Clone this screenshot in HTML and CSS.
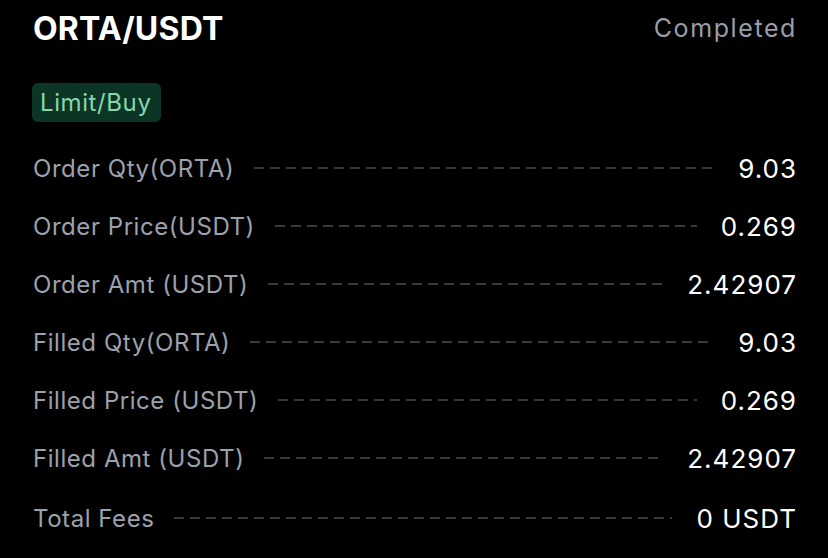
FILE: index.html
```html
<!DOCTYPE html>
<html>
<head>
<meta charset="utf-8">
<link rel="stylesheet" href="styles.css">
</head>
<body>
<div class="card">
  <div class="header">
    <div class="pair">ORTA/USDT</div>
    <div class="status">Completed</div>
  </div>
  <div class="badge-row"><span class="badge">Limit/Buy</span></div>
  <div class="rows">
    <div class="row"><span class="label">Order Qty(ORTA)</span><span class="dash"></span><span class="value">9.03</span></div>
    <div class="row"><span class="label">Order Price(USDT)</span><span class="dash"></span><span class="value">0.269</span></div>
    <div class="row"><span class="label">Order Amt (USDT)</span><span class="dash"></span><span class="value">2.42907</span></div>
    <div class="row"><span class="label">Filled Qty(ORTA)</span><span class="dash"></span><span class="value">9.03</span></div>
    <div class="row"><span class="label">Filled Price (USDT)</span><span class="dash"></span><span class="value">0.269</span></div>
    <div class="row"><span class="label">Filled Amt (USDT)</span><span class="dash"></span><span class="value">2.42907</span></div>
    <div class="row last"><span class="label">Total Fees</span><span class="dash"></span><span class="value">0 USDT</span></div>
  </div>
</div>
</body>
</html>
```
FILE: styles.css
```css
html, body {
  margin: 0;
  padding: 0;
  background: #000;
}
body {
  width: 828px;
  height: 558px;
  overflow: hidden;
  font-family: Inter, "Noto Sans", sans-serif;
}
.card {
  padding: 8px 32px 0 33px;
}
.header {
  display: flex;
  justify-content: space-between;
  align-items: center;
  height: 40px;
}
.pair {
  color: #fff;
  font-size: 32px;
  font-weight: 700;
  letter-spacing: 0.2px;
}
.status {
  color: #9a9ea8;
  font-size: 25px;
  letter-spacing: 1.6px;
  margin-right: -1px;
}
.badge-row {
  margin-top: 35px;
  display: flex;
}
.badge {
  display: inline-block;
  background: #0b3524;
  color: #8ad5ad;
  font-size: 24px;
  line-height: 39px;
  padding: 0 9px 0 8px;
  border-radius: 6px;
  margin-left: -1px;
  letter-spacing: 0.6px;
}
.rows {
  margin-top: 17px;
}
.row {
  display: flex;
  align-items: center;
  height: 58px;
}
.row.last {
  height: 60px;
  padding-top: 1px;
}
.label {
  color: #9ca1ab;
  font-size: 24px;
  letter-spacing: 0.55px;
  white-space: nowrap;
}
.value {
  color: #fff;
  font-size: 26px;
  letter-spacing: 1px;
  white-space: nowrap;
  margin-right: -1px;
}
.dash {
  flex: 1;
  height: 2px;
  margin: 0 24px 0 20px;
  background-image: linear-gradient(to right, #36383d 0, #36383d 10px, transparent 10px);
  background-size: 16px 2px;
  background-repeat: repeat-x;
}
```
